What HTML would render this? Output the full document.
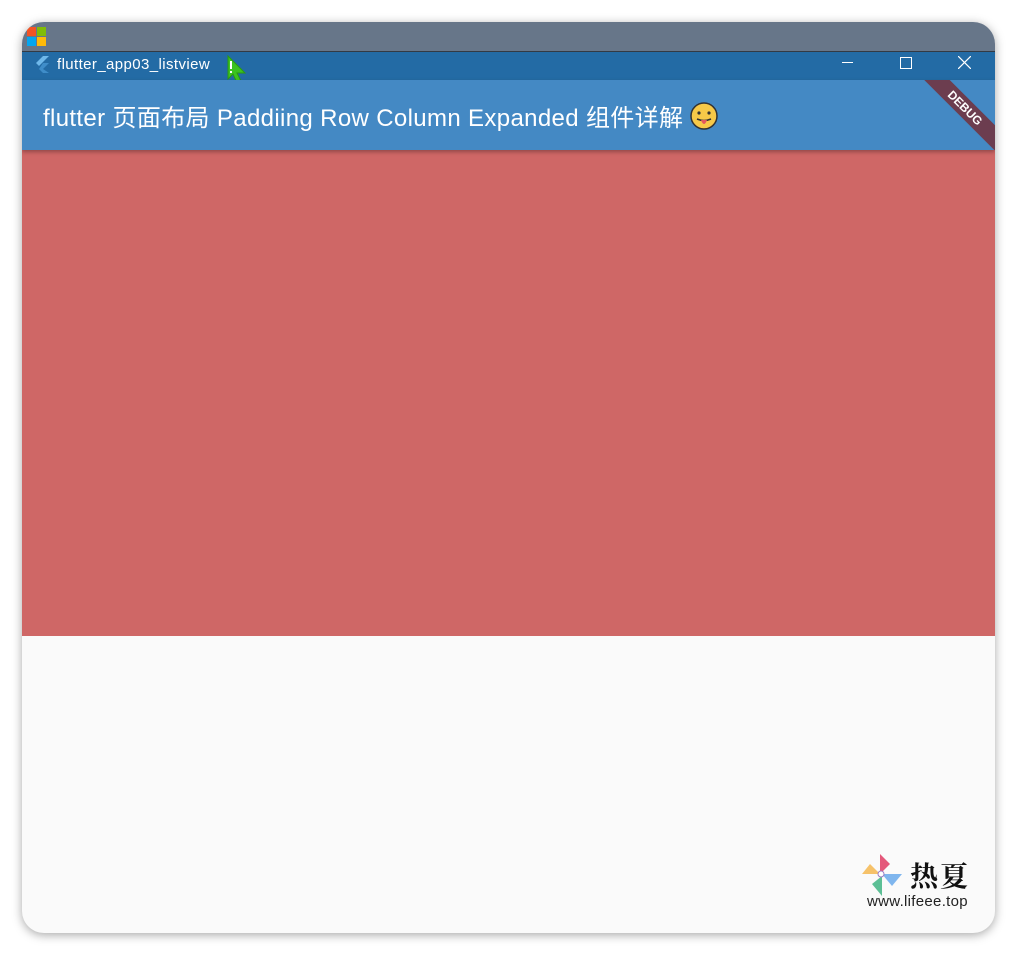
<!DOCTYPE html>
<html><head><meta charset="utf-8"><style>
body{margin:0;width:1017px;height:956px;background:#fff;position:relative;overflow:hidden;font-family:"Liberation Sans","Noto Sans CJK SC",sans-serif}
.win{position:absolute;left:22px;top:22px;width:973px;height:911px;border-radius:22px;overflow:hidden;background:#fafafa;box-shadow:0 2px 10px rgba(0,0,0,.35)}
.top{position:absolute;left:0;top:0;width:100%;height:29px;background:#677689}
.line{position:absolute;left:0;top:29px;width:100%;height:2px;background:#333a44}
.tb{position:absolute;left:0;top:30px;width:100%;height:28px;background:#236ba5;color:#fff;font-size:15px;letter-spacing:.4px}
.app{position:absolute;left:0;top:58px;width:100%;height:70px;background:#4489c4;color:#fff;font-size:24px;box-shadow:0 2px 4px rgba(0,0,0,.3);z-index:2;overflow:hidden}
.red{position:absolute;left:0;top:128px;width:100%;height:486px;background:#cf6766}
</style></head><body>
<div class="win">
<div class="top">
<div style="position:absolute;left:5px;top:5px;width:9px;height:9px;background:#f35325"></div>
<div style="position:absolute;left:15px;top:5px;width:9px;height:9px;background:#81bc06"></div>
<div style="position:absolute;left:5px;top:15px;width:9px;height:9px;background:#05a6f0"></div>
<div style="position:absolute;left:15px;top:15px;width:9px;height:9px;background:#ffba08"></div>
</div>
<div class="line"></div>
<div class="tb">
<svg style="position:absolute;left:12px;top:3px" width="16" height="18"><path d="M9 1 L15 1 L5 11 L2 8Z" fill="#6fb8ea"/><path d="M9 8 L15 8 L9 14 L15 18 L9 18 L5 14Z" fill="#3f8dc9"/></svg>
<span style="position:absolute;left:35px;top:4px">flutter_app03_listview</span>
<svg style="position:absolute;left:204px;top:3px" width="24" height="30"><path d="M2 1 L2 24 L7 19 L11 28 L15 26 L11 18 L19 18Z" fill="#3cc31f" stroke="#2a9a12"/><rect x="4" y="6" width="2" height="8" fill="#fff"/><rect x="4" y="16" width="2" height="2" fill="#fff"/></svg>
<div style="position:absolute;left:820px;top:10px;width:11px;height:1px;background:#fff"></div>
<div style="position:absolute;left:878px;top:5px;width:10px;height:10px;border:1px solid #fff"></div>
<svg style="position:absolute;left:936px;top:4px" width="13" height="13"><path d="M0 0L13 13M13 0L0 13" stroke="#fff" stroke-width="1.2"/></svg>
</div>
<div class="app"><span style="position:absolute;left:21px;top:18px;letter-spacing:.35px;white-space:nowrap">flutter 页面布局 Paddiing Row Column Expanded 组件详解</span>
<svg style="position:absolute;left:667px;top:21px" width="30" height="30"><circle cx="15" cy="15" r="13" fill="#f7c948" stroke="#333" stroke-width="1.5"/><circle cx="10" cy="12" r="1.6" fill="#333"/><circle cx="20" cy="12" r="1.6" fill="#333"/><path d="M8 18 Q15 21 22 18" stroke="#333" fill="none" stroke-width="1.5"/><path d="M12 19 Q15 27 18 19Z" fill="#e4585e"/></svg>
<div style="position:absolute;left:888px;top:19px;width:110px;height:18px;background:#6c3d4f;transform:rotate(45deg);color:#fff;font-size:12px;font-weight:bold;text-align:center;line-height:18px">DEBUG</div>
</div>
<div class="red"></div>
<svg style="position:absolute;left:838px;top:830px" width="44" height="44"><path d="M20 2 L20 22 L30 12Z" fill="#e4587a"/><path d="M22 22 L42 22 L32 34Z" fill="#7fb6ee"/><path d="M22 24 L22 44 L12 32Z" fill="#5cbf95"/><path d="M20 22 L2 22 L10 12Z" fill="#f6c26a"/><circle cx="21" cy="22" r="3" fill="#fff" stroke="#9a7bc4"/></svg>
<span style="position:absolute;left:888px;top:833px;font-size:28px;font-family:'Noto Serif CJK SC',serif;color:#111;letter-spacing:2px;font-weight:bold">热夏</span>
<span style="position:absolute;left:845px;top:871px;font-size:15px;color:#222;letter-spacing:.3px">www.lifeee.top</span>
</div>
</body></html>
